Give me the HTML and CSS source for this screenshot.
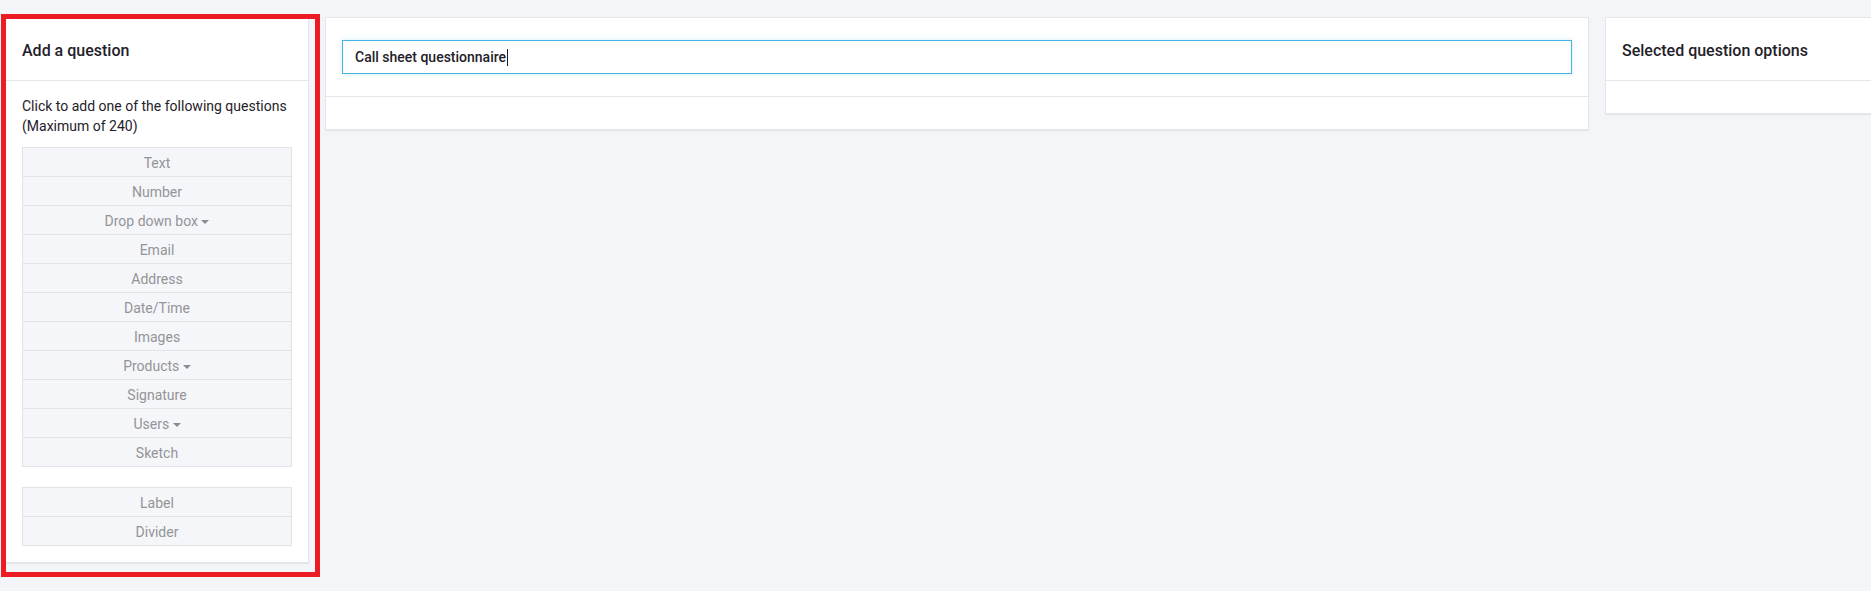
FILE: index.html
```html
<!DOCTYPE html>
<html lang="en">
<head>
<meta charset="utf-8">
<title>Questionnaire builder</title>
<link rel="stylesheet" href="styles.css">
</head>
<body>
<div class="layout">
  <section class="panel panel-add">
    <header class="panel-head"><h2 class="panel-title">Add a question</h2></header>
    <div class="panel-body">
      <p class="hint">Click to add one of the following questions<br>(Maximum of 240)</p>
      <ul class="qlist">
        <li class="qitem">Text</li>
        <li class="qitem">Number</li>
        <li class="qitem">Drop down box <span class="caret"></span></li>
        <li class="qitem">Email</li>
        <li class="qitem">Address</li>
        <li class="qitem">Date/Time</li>
        <li class="qitem">Images</li>
        <li class="qitem">Products <span class="caret"></span></li>
        <li class="qitem">Signature</li>
        <li class="qitem">Users <span class="caret"></span></li>
        <li class="qitem">Sketch</li>
      </ul>
      <ul class="qlist qlist-extra">
        <li class="qitem">Label</li>
        <li class="qitem">Divider</li>
      </ul>
    </div>
    <div class="highlight"></div>
  </section>

  <section class="panel panel-main">
    <div class="main-body">
      <div class="title-input">Call sheet questionnaire<span class="cursor"></span></div>
    </div>
    <div class="main-foot"></div>
  </section>

  <section class="panel panel-options">
    <header class="panel-head"><h2 class="panel-title">Selected question options</h2></header>
    <div class="options-body"></div>
  </section>
</div>
</body>
</html>
```

FILE: styles.css
```css
* { box-sizing: border-box; }

html, body {
  margin: 0;
  padding: 0;
}

body {
  background: #f4f5f8;
  font-family: Roboto, "Liberation Sans", Arial, sans-serif;
  color: #1f2129;
  overflow: hidden;
  height: 591px;
}

.layout {
  display: flex;
  align-items: flex-start;
  gap: 16px;
  padding: 17px 0 0 5px;
}

.panel {
  background: #fff;
  border: 1px solid #e5e6e9;
  box-shadow: 0 1px 1px rgba(0, 0, 0, 0.06);
  flex-shrink: 0;
}

.panel-add {
  width: 304px;
  position: relative;
}

.panel-main {
  width: 1264px;
}

.panel-options {
  flex: 1;
  min-width: 0;
  border-right: 0;
}

.panel-head {
  height: 63px;
  display: flex;
  align-items: center;
  padding: 0 16px;
  border-bottom: 1px solid #e5e6e9;
}

.panel-title {
  margin: 0;
  font-size: 16px;
  font-weight: 500;
  color: #1f2129;
  position: relative;
  top: 1px;
  white-space: nowrap;
}

.panel-body {
  padding: 15px 16px 16px;
}

.hint {
  margin: 0 0 11px;
  font-size: 14px;
  line-height: 20px;
  color: #1f2129;
}

.qlist {
  list-style: none;
  margin: 0;
  padding: 0;
  border: 1px solid #e2e3e6;
}

.qlist-extra {
  margin-top: 20px;
}

.qitem {
  height: 28px;
  padding: 5px 0 3px;
  line-height: 20px;
  font-size: 14px;
  text-align: center;
  color: #949497;
  background: #f5f6fa;
}

.qitem + .qitem {
  height: 29px;
  border-top: 1px solid #e2e3e6;
}

.caret {
  display: inline-block;
  width: 0;
  height: 0;
  vertical-align: middle;
  border-top: 4px solid #8b8c90;
  border-left: 4px solid transparent;
  border-right: 4px solid transparent;
}

.highlight {
  position: absolute;
  left: -5px;
  top: -4px;
  width: 319px;
  height: 563px;
  border: 5px solid #ed1c24;
  pointer-events: none;
}

.main-body {
  padding: 22px 16px;
  border-bottom: 1px solid #e5e6e9;
}

.title-input {
  height: 34px;
  border: 1px solid #45b5e6;
  box-shadow: 0 0 5px rgba(69, 181, 230, 0.25);
  padding: 0 12px;
  display: flex;
  align-items: center;
  font-size: 14px;
  font-weight: 500;
  color: #1f2129;
}

.cursor {
  display: inline-block;
  width: 1px;
  height: 17px;
  background: #1f2129;
  margin-left: 1px;
}

.main-foot {
  height: 32px;
}

.options-body {
  height: 32px;
}
```
